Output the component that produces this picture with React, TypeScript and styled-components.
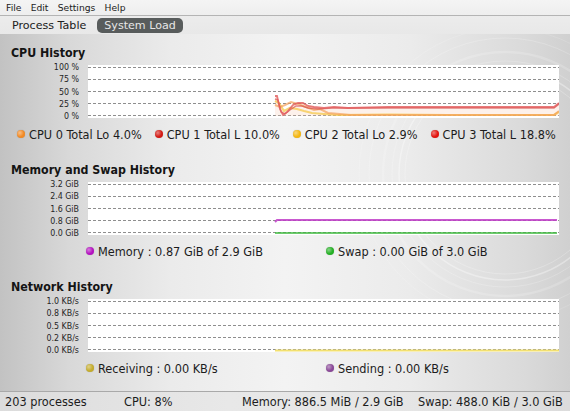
import React from "react";
import styled, { createGlobalStyle } from "styled-components";

const GlobalStyle = createGlobalStyle`
  html, body { margin: 0; padding: 0; }
  body { font-family: "DejaVu Sans", "Liberation Sans", sans-serif; background: #e6e6e6; }
`;

const COND = `"DejaVu Sans Condensed", "DejaVu Sans", sans-serif`;

const Window = styled.div`
  width: 570px;
  height: 411px;
  display: flex;
  flex-direction: column;
  overflow: hidden;
  color: #1c1c1c;
  background: #ececec;
`;

const MenuBar = styled.div`
  height: 16px;
  box-sizing: border-box;
  display: flex;
  align-items: center;
  padding-left: 1.5px;
  background: linear-gradient(#f4f4f4, #eeeeee);
  border-bottom: 1px solid #b4b4b4;
  font-size: 9.2px;
`;

const MenuItem = styled.span`
  padding: 0 4.6px;
  line-height: 14px;
`;

const TabBar = styled.div`
  height: 18px;
  display: flex;
  align-items: center;
  padding-left: 12px;
  gap: 11px;
  background: linear-gradient(#ececec, #e8e8e8);
`;

const Tab = styled.div<{ $active?: boolean }>`
  height: 15px;
  display: flex;
  align-items: center;
  border-radius: 5px;
  padding: ${(p) => (p.$active ? "0 7px" : "0")};
  background: ${(p) => (p.$active ? "#585c5c" : "transparent")};
  color: ${(p) => (p.$active ? "#e6e6e6" : "#202020")};
  font-size: 11.1px;
`;

const Body = styled.div`
  position: relative;
  flex: 1;
  padding: 12px 11px 0 11px;
  background: linear-gradient(
    to right,
    #c2c2c2 0%,
    #d8d8d8 12%,
    #ebebeb 30%,
    #f3f3f3 50%,
    #ebebeb 72%,
    #dadada 92%,
    #d0d0d0 100%
  );
  overflow: hidden;
`;

const Decor = styled.svg`
  position: absolute;
  left: 0;
  top: 0;
  pointer-events: none;
`;

const Section = styled.section`
  position: relative;
  display: flex;
  flex-direction: column;
  margin-bottom: 13px;
`;

const Title = styled.h2`
  margin: 0;
  height: 14px;
  line-height: 14px;
  font-family: ${COND};
  font-weight: bold;
  font-size: 12.3px;
  color: #141414;
`;

const ChartRow = styled.div`
  display: flex;
  align-items: flex-start;
  gap: 9px;
  margin-top: 5px;
  height: 53px;
`;

const Axis = styled.div`
  width: 68px;
  height: 59px;
  margin-top: -3px;
  display: flex;
  flex-direction: column;
  justify-content: space-between;
  align-items: flex-end;
  font-family: ${COND};
  font-size: 8.8px;
  line-height: 10px;
  color: #262626;
`;

const Plot = styled.svg`
  display: block;
  width: 471px;
  height: 53px;
  background: #ffffff;
`;

const Legend = styled.div<{ $columns?: boolean }>`
  height: 32px;
  display: ${(p) => (p.$columns ? "grid" : "flex")};
  grid-template-columns: 240px 240px;
  align-items: center;
  column-gap: ${(p) => (p.$columns ? "0" : "13px")};
  padding-left: ${(p) => (p.$columns ? "75px" : "6px")};
  font-family: ${COND};
  font-size: 12.6px;
  color: #1c1c1c;
`;

const LegendItem = styled.div`
  display: flex;
  align-items: center;
  gap: 4px;
  white-space: nowrap;
`;

const Dot = styled.span<{ $color: string }>`
  width: 8px;
  height: 8px;
  border-radius: 50%;
  flex: none;
  background: radial-gradient(circle at 35% 35%, rgba(255, 255, 255, 0.45), rgba(255, 255, 255, 0) 55%), ${(p) => p.$color};
  box-shadow: 0 0 1px rgba(0, 0, 0, 0.25);
`;

const StatusBar = styled.div`
  height: 20px;
  box-sizing: border-box;
  display: flex;
  align-items: center;
  padding-left: 5px;
  border-top: 1px solid #a9a9a9;
  background: linear-gradient(to right, #dcdcdc, #e8e8e8 40%, #e6e6e6 70%, #dcdcdc);
  font-family: ${COND};
  font-size: 12.6px;
  color: #1c1c1c;
`;

const StatusItem = styled.span<{ $width?: number }>`
  width: ${(p) => (p.$width ? `${p.$width}px` : "auto")};
  flex: none;
  white-space: nowrap;
`;

const GRID_Y = [2.5, 14.5, 26.5, 38.5, 50.5];

function Chart({ labels, children }: { labels: string[]; children?: React.ReactNode }) {
  return (
    <ChartRow>
      <Axis>
        {labels.map((l) => (
          <span key={l}>{l}</span>
        ))}
      </Axis>
      <Plot viewBox="0 0 471 53">
        {GRID_Y.map((y) => (
          <line
            key={y}
            x1={0}
            x2={471}
            y1={y}
            y2={y}
            stroke="#8e8e8e"
            strokeWidth={1}
            strokeDasharray="3 2"
            shapeRendering="crispEdges"
          />
        ))}
        {children}
      </Plot>
    </ChartRow>
  );
}

const cpu3 =
  "M187,31 L189,31 L192,44 L195,50 L199,47 L205,40 L210,38 L215,38 L220,41 L226,42 L236,43 L246,42 L260,43 L300,42 L360,42 L420,42 L466,42 L471,38";
const cpu1 =
  "M187,34 L190,35 L193,47 L197,49 L202,45 L208,41 L214,41 L220,43 L230,44 L244,43 L262,43 L320,43 L400,43 L466,43 L471,39";
const cpu0 =
  "M187,40 L192,42 L197,40 L203,37 L210,39 L218,42 L226,45 L232,44 L240,48 L252,49 L262,50 L466,50 L471,46";
const cpu2 =
  "M187,36 L191,38 L196,46 L202,43 L209,44 L216,46 L224,48 L236,49 L250,50 L300,49.5 L360,50 L466,50 L471,47";

const RINGS = [
  { r: 100, o: 0.22, w: 1 },
  { r: 106, o: 0.35, w: 1.5 },
  { r: 113, o: 0.2, w: 1 },
  { r: 122, o: 0.18, w: 2.5 },
  { r: 136, o: 0.2, w: 1 },
  { r: 146, o: 0.14, w: 1 },
];

export default function App() {
  return (
    <>
      <GlobalStyle />
      <Window>
        <MenuBar>
          <MenuItem>File</MenuItem>
          <MenuItem>Edit</MenuItem>
          <MenuItem>Settings</MenuItem>
          <MenuItem>Help</MenuItem>
        </MenuBar>
        <TabBar>
          <Tab>Process Table</Tab>
          <Tab $active>System Load</Tab>
        </TabBar>
        <Body>
          <Decor width="570" height="360" viewBox="0 0 570 360">
            <g fill="none" stroke="#ffffff">
              {RINGS.map((ring) => (
                <circle
                  key={ring.r}
                  cx="505"
                  cy="140"
                  r={ring.r}
                  strokeOpacity={ring.o}
                  strokeWidth={ring.w}
                />
              ))}
            </g>
          </Decor>

          <Section>
            <Title>CPU History</Title>
            <Chart labels={["100 %", "75 %", "50 %", "25 %", "0 %"]}>
              <path d={`${cpu3} L471,51 L187,51 Z`} fill="#f6c7b0" fillOpacity="0.25" />
              <path d={cpu2} fill="none" stroke="#f5c84a" strokeWidth="2.2" strokeOpacity="0.75" />
              <path d={cpu0} fill="none" stroke="#f3a05a" strokeWidth="2" strokeOpacity="0.7" />
              <path d={cpu1} fill="none" stroke="#d03a3a" strokeWidth="1.4" strokeOpacity="0.6" />
              <path d={cpu3} fill="none" stroke="#e25a5a" strokeWidth="1.8" strokeOpacity="0.8" />
            </Chart>
            <Legend>
              <LegendItem>
                <Dot $color="#f28a24" />
                CPU 0 Total Lo 4.0%
              </LegendItem>
              <LegendItem>
                <Dot $color="#d41a14" />
                CPU 1 Total L 10.0%
              </LegendItem>
              <LegendItem>
                <Dot $color="#f4b712" />
                CPU 2 Total Lo 2.9%
              </LegendItem>
              <LegendItem>
                <Dot $color="#e3140e" />
                CPU 3 Total L 18.8%
              </LegendItem>
            </Legend>
          </Section>

          <Section>
            <Title>Memory and Swap History</Title>
            <Chart labels={["3.2 GiB", "2.4 GiB", "1.6 GiB", "0.8 GiB", "0.0 GiB"]}>
              <path d="M187,40 L189,38 L469,38" fill="none" stroke="#c03cc8" strokeWidth="2" strokeOpacity="0.85" />
              <path d="M187,51 L469,51" fill="none" stroke="#3cba3c" strokeWidth="1.6" />
            </Chart>
            <Legend $columns>
              <LegendItem>
                <Dot $color="#b412c0" />
                Memory : 0.87 GiB of 2.9 GiB
              </LegendItem>
              <LegendItem>
                <Dot $color="#24b024" />
                Swap : 0.00 GiB of 3.0 GiB
              </LegendItem>
            </Legend>
          </Section>

          <Section>
            <Title>Network History</Title>
            <Chart labels={["1.0 KB/s", "0.8 KB/s", "0.5 KB/s", "0.2 KB/s", "0.0 KB/s"]}>
              <path d="M187,51.5 L471,51.5" fill="none" stroke="#f2e070" strokeWidth="2" />
            </Chart>
            <Legend $columns>
              <LegendItem>
                <Dot $color="#c4ac2c" />
                Receiving : 0.00 KB/s
              </LegendItem>
              <LegendItem>
                <Dot $color="#8a4898" />
                Sending : 0.00 KB/s
              </LegendItem>
            </Legend>
          </Section>
        </Body>
        <StatusBar>
          <StatusItem $width={119}>203 processes</StatusItem>
          <StatusItem $width={118}>CPU: 8%</StatusItem>
          <StatusItem $width={176}>Memory: 886.5 MiB / 2.9 GiB</StatusItem>
          <StatusItem>Swap: 488.0 KiB / 3.0 GiB</StatusItem>
        </StatusBar>
      </Window>
    </>
  );
}
